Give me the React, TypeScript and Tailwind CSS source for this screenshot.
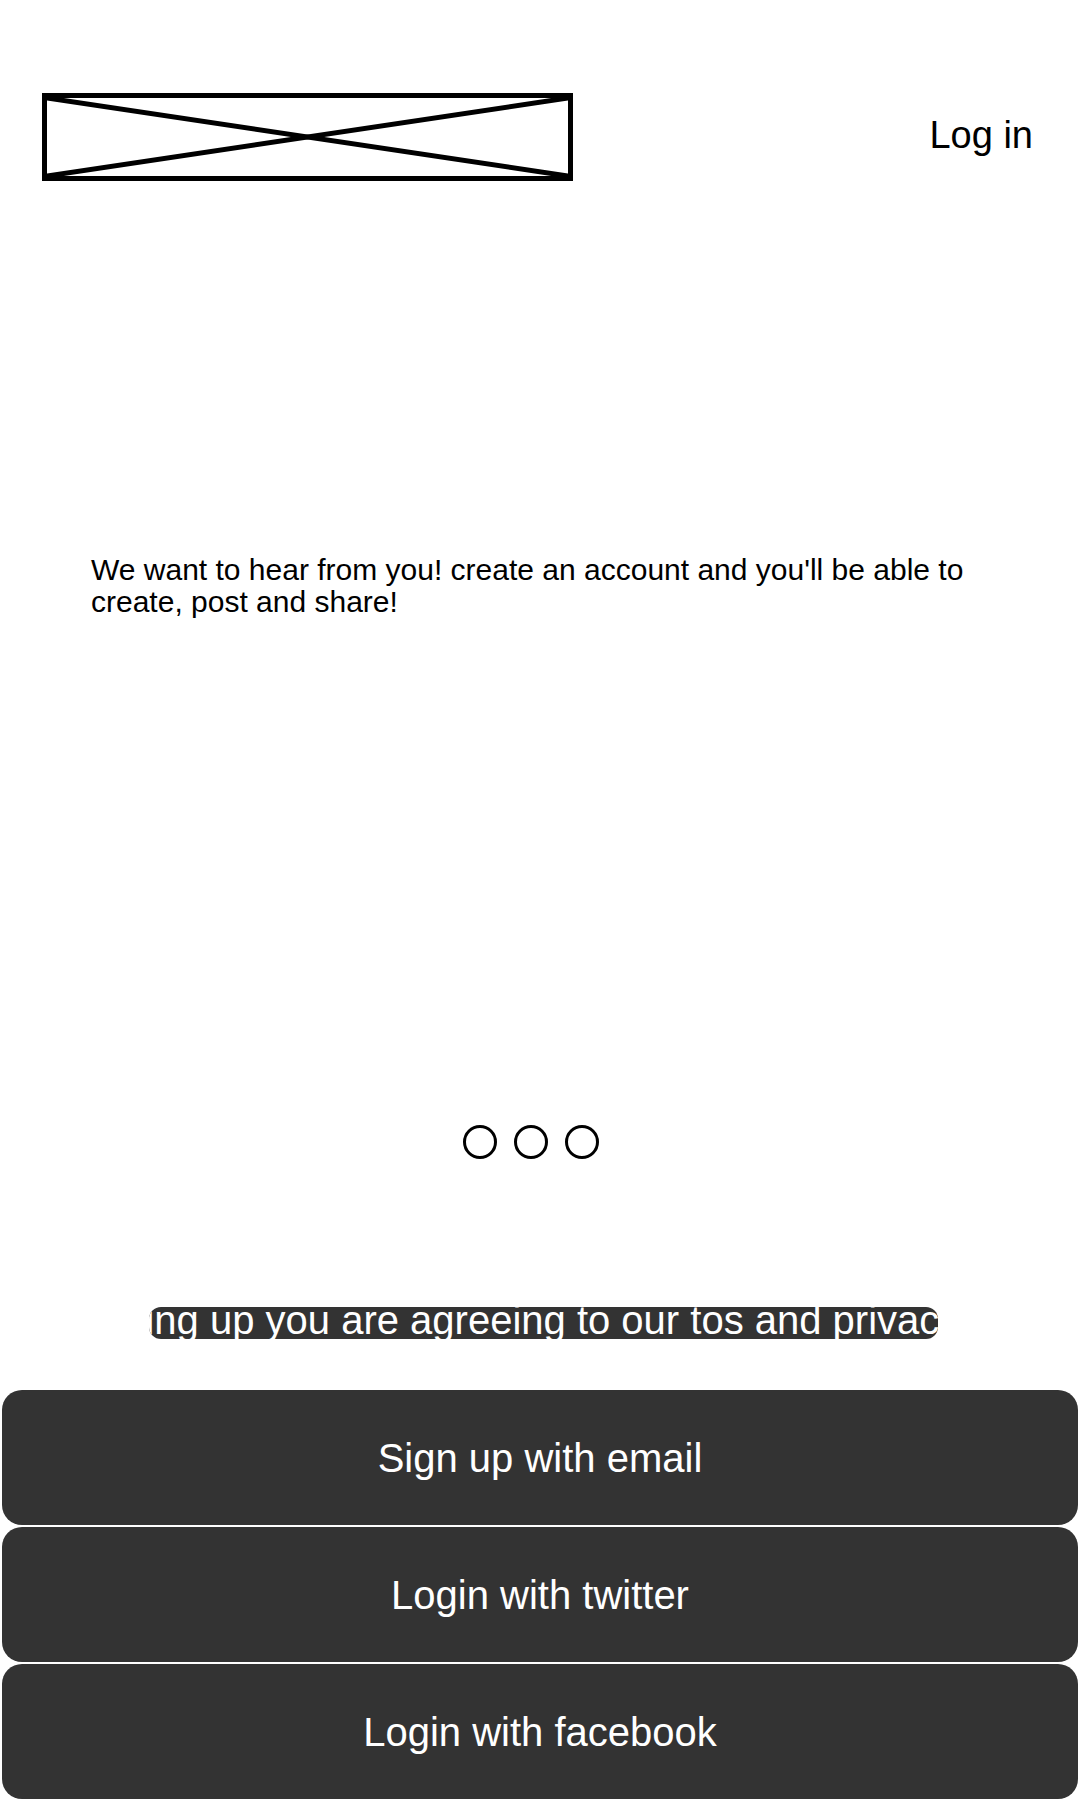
const buttons = ['Sign up with email', 'Login with twitter', 'Login with facebook']

function LogoPlaceholder() {
  return (
    <div className="w-[531px] h-[88px] border-[5px] border-black">
      <svg className="w-full h-full block" viewBox="0 0 521 78" preserveAspectRatio="none">
        <line x1="0" y1="0" x2="521" y2="78" stroke="black" strokeWidth="5" />
        <line x1="521" y1="0" x2="0" y2="78" stroke="black" strokeWidth="5" />
      </svg>
    </div>
  )
}

export default function App() {
  return (
    <div
      className="w-[1080px] h-[1800px] bg-white text-black overflow-hidden flex flex-col"
      style={{ fontFamily: '"Liberation Sans", Arial, sans-serif' }}
    >
      {/* header */}
      <div className="mt-[93px] flex items-start justify-between pl-[42px] pr-[47px]">
        <LogoPlaceholder />
        <span className="mt-[22px] text-[38px] leading-[40px]">Log in</span>
      </div>

      <p className="mt-[373px] px-[91px] text-[30px] leading-[32px]">
        We want to hear from you! create an account and you'll be able to create, post and share!
      </p>

      {/* pager dots */}
      <div className="mt-[507px] flex justify-center gap-[17px] pr-[18px]">
        {[0, 1, 2].map(i => (
          <div key={i} className="w-[34px] h-[34px] rounded-full border-[3px] border-black" />
        ))}
      </div>

      {/* terms */}
      <div className="mt-[148px] ml-[149px] w-[789px] h-[32px] rounded-[12px] bg-[#333333] overflow-hidden flex justify-center items-start">
        <span className="whitespace-nowrap text-white text-[40px] leading-[27px] shrink-0">
          By signing up you are agreeing to our tos and privacy policy
        </span>
      </div>

      <div className="mt-[51px] flex flex-col gap-[2px] px-[2px]">
        {buttons.map(b => (
          <button
            key={b}
            className="h-[135px] w-full rounded-[20px] bg-[#333333] text-white text-[40px] flex items-center justify-center"
          >
            {b}
          </button>
        ))}
      </div>
    </div>
  )
}
